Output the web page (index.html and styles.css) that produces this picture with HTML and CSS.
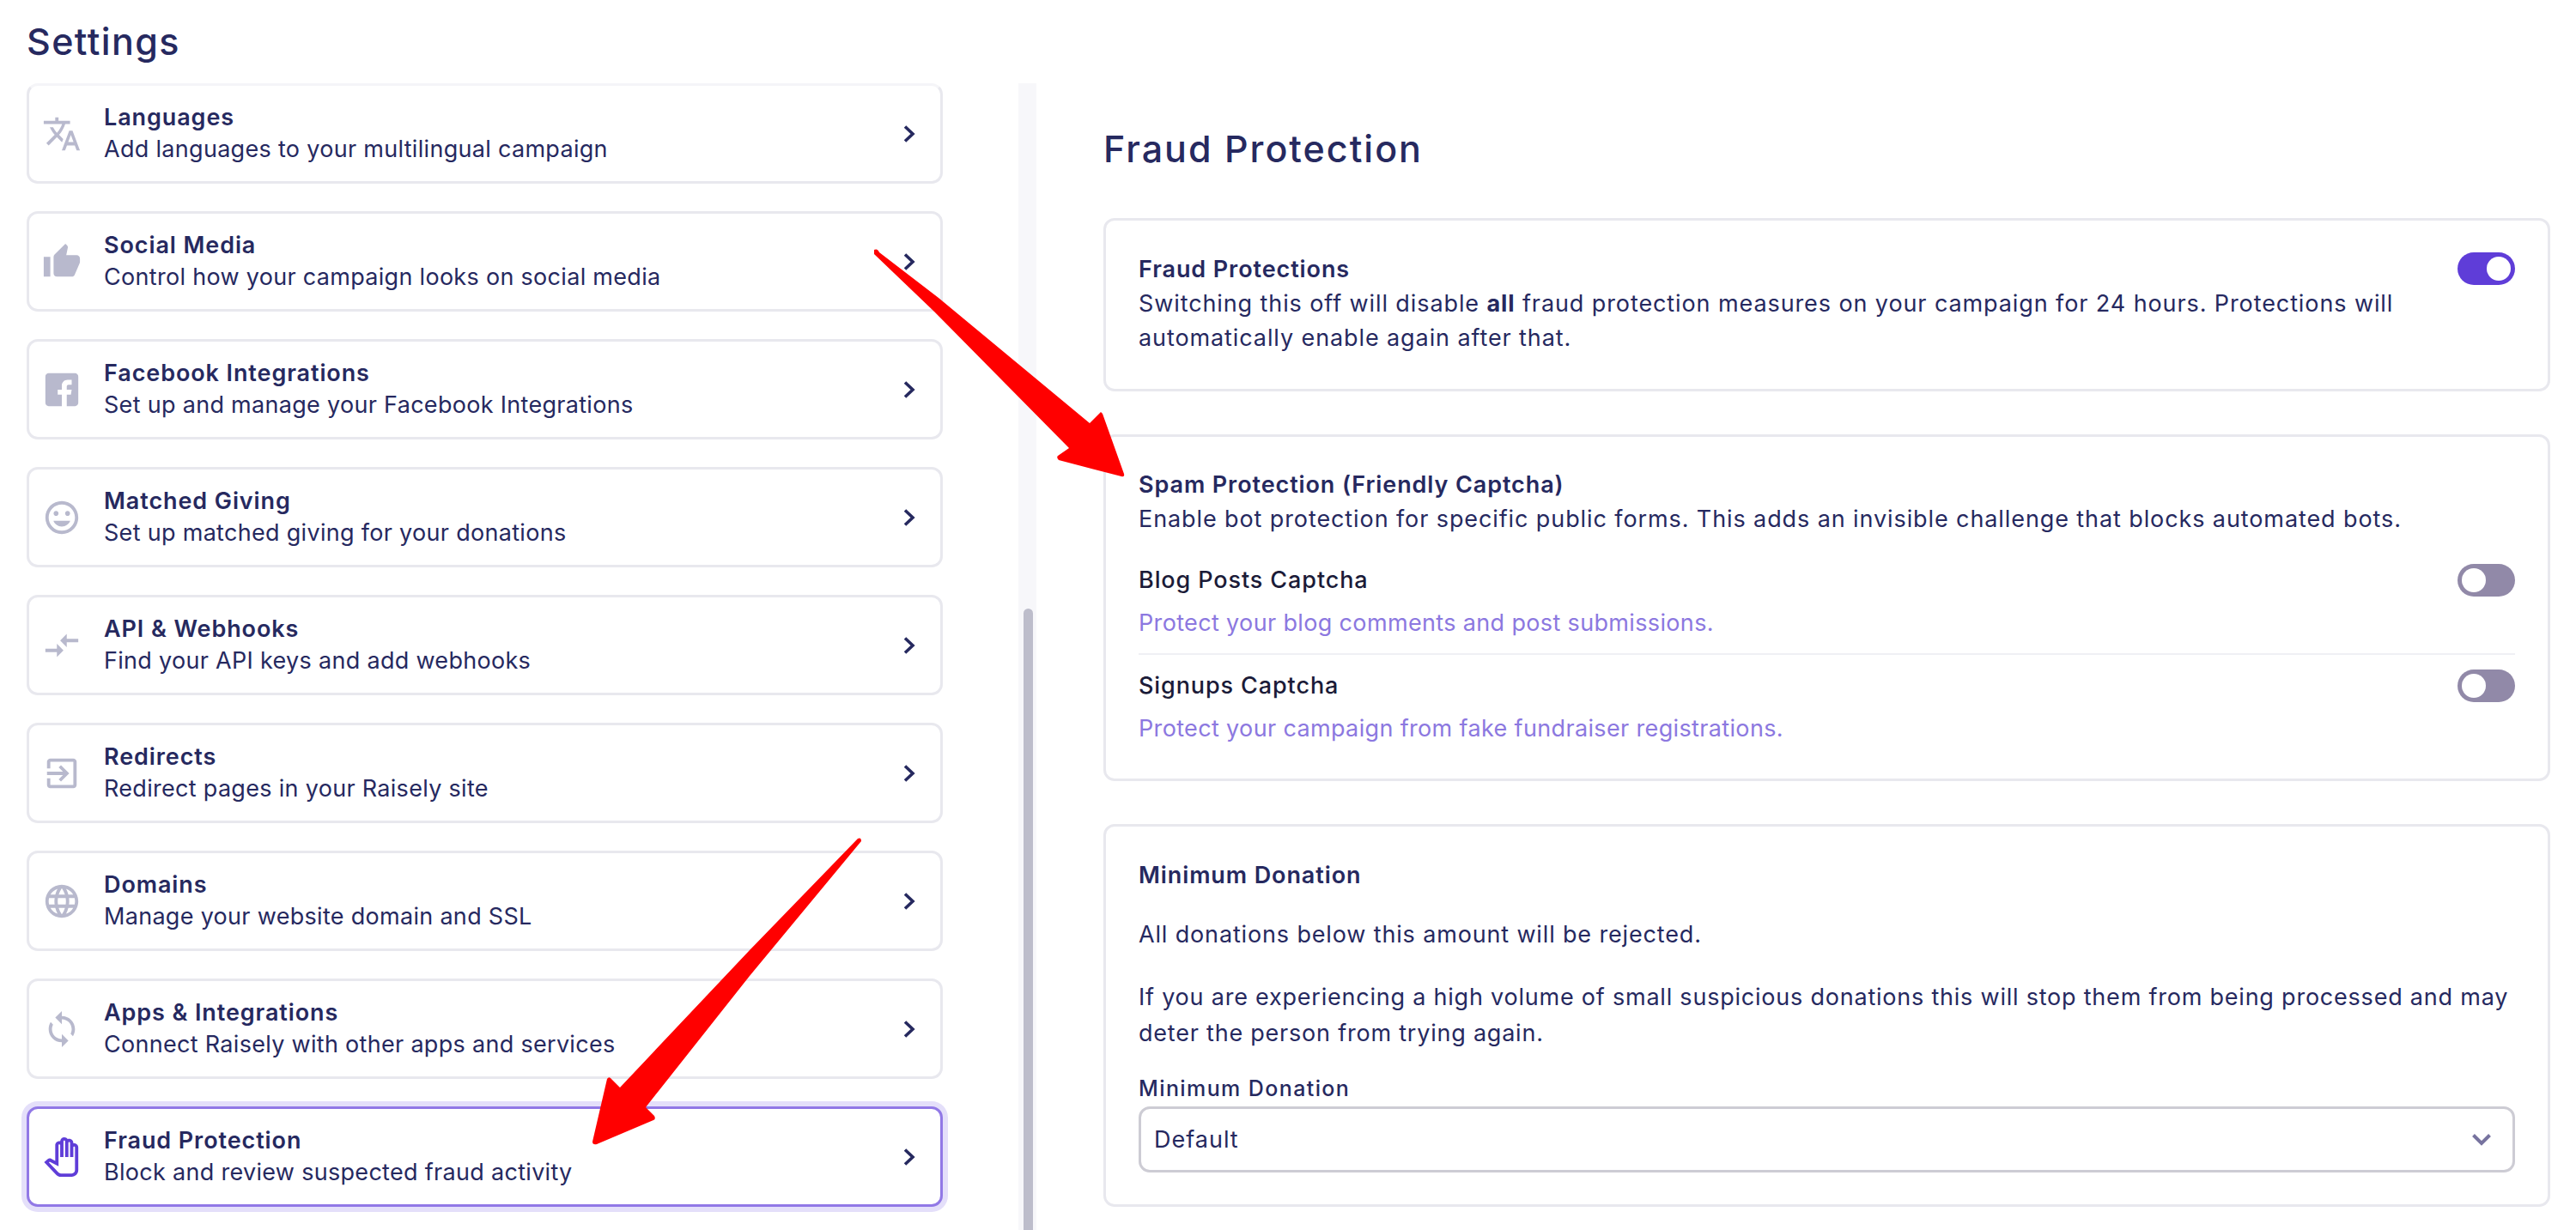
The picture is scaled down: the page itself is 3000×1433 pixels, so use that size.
FILE: index.html
```html
<!DOCTYPE html>
<html>
<head>
    <meta charset="utf-8">
    <title>Settings</title>
    <link rel="stylesheet" href="styles.css">
</head>
<body>
<div class="page">
    <aside class="sidebar">
        <h1 class="sidebar-title">Settings</h1>
        <div class="sidebar-body">
            <nav class="menu">
                <a class="menu-item first">
                    <svg class="menu-icon" viewBox="0 0 24 24"><path d="M12.87 15.07l-2.54-2.51.03-.03c1.74-1.94 2.98-4.17 3.71-6.53H17V4h-7V2H8v2H1v1.99h11.17C11.5 7.92 10.44 9.75 9 11.35 8.07 10.32 7.3 9.19 6.69 8h-2c.73 1.63 1.73 3.17 2.98 4.56l-5.09 5.02L4 19l5-5 3.11 3.11.76-2.04zM18.5 10h-2L12 22h2l1.12-3h4.75L21 22h2l-4.5-12zm-2.62 7l1.62-4.33L19.12 17h-3.24z"/></svg>
                    <div class="menu-text"><div class="menu-title">Languages</div><div class="menu-desc">Add languages to your multilingual campaign</div></div>
                    <svg class="menu-chevron" viewBox="0 0 14 20"><path d="M2 1.5L11 10L2 18.5"/></svg>
                </a>
                <a class="menu-item">
                    <svg class="menu-icon" viewBox="0 0 24 24"><path d="M1 21h4V9H1v12zm22-11c0-1.1-.9-2-2-2h-6.31l.95-4.57.03-.32c0-.41-.17-.79-.44-1.06L14.17 1 7.59 7.59C7.22 7.95 7 8.45 7 9v10c0 1.1.9 2 2 2h9c.83 0 1.54-.5 1.84-1.22l3.02-7.05c.09-.23.14-.47.14-.73v-2z"/></svg>
                    <div class="menu-text"><div class="menu-title">Social Media</div><div class="menu-desc">Control how your campaign looks on social media</div></div>
                    <svg class="menu-chevron" viewBox="0 0 14 20"><path d="M2 1.5L11 10L2 18.5"/></svg>
                </a>
                <a class="menu-item">
                    <svg class="menu-icon" viewBox="0 0 24 24"><path d="M20 2H4c-1.1 0-2 .9-2 2v16c0 1.1.9 2 2 2h8v-7h-2.5v-3H12V9.5C12 7.5 13.5 6 15.5 6H18v3h-2c-.55 0-1 .45-1 1v2h3l-.5 3H15v7h5c1.1 0 2-.9 2-2V4c0-1.1-.9-2-2-2z"/></svg>
                    <div class="menu-text"><div class="menu-title">Facebook Integrations</div><div class="menu-desc">Set up and manage your Facebook Integrations</div></div>
                    <svg class="menu-chevron" viewBox="0 0 14 20"><path d="M2 1.5L11 10L2 18.5"/></svg>
                </a>
                <a class="menu-item">
                    <svg class="menu-icon" viewBox="0 0 24 24"><path d="M11.99 2C6.47 2 2 6.48 2 12s4.47 10 9.99 10C17.52 22 22 17.52 22 12S17.52 2 11.99 2zM12 20c-4.42 0-8-3.58-8-8s3.58-8 8-8 8 3.58 8 8-3.58 8-8 8zm3.5-9c.83 0 1.5-.67 1.5-1.5S16.33 8 15.5 8 14 8.67 14 9.5s.67 1.5 1.5 1.5zm-7 0c.83 0 1.5-.67 1.5-1.5S9.33 8 8.5 8 7 8.67 7 9.5 7.67 11 8.5 11zm3.5 6.5c2.33 0 4.31-1.46 5.11-3.5H6.89c.8 2.04 2.78 3.5 5.11 3.5z"/></svg>
                    <div class="menu-text"><div class="menu-title">Matched Giving</div><div class="menu-desc">Set up matched giving for your donations</div></div>
                    <svg class="menu-chevron" viewBox="0 0 14 20"><path d="M2 1.5L11 10L2 18.5"/></svg>
                </a>
                <a class="menu-item">
                    <svg class="menu-icon" viewBox="0 0 24 24"><path d="M9.01 14H2v2h7.01v3L13 15l-3.99-4v3zm5.98-1v-3H22V8h-7.01V5L11 9l3.99 4z"/></svg>
                    <div class="menu-text"><div class="menu-title">API &amp; Webhooks</div><div class="menu-desc">Find your API keys and add webhooks</div></div>
                    <svg class="menu-chevron" viewBox="0 0 14 20"><path d="M2 1.5L11 10L2 18.5"/></svg>
                </a>
                <a class="menu-item">
                    <svg class="menu-icon" viewBox="0 0 24 24"><path d="M10.09 15.59L11.5 17l5-5-5-5-1.41 1.41L12.67 11H3v2h9.67l-2.58 2.59zM19 3H5c-1.11 0-2 .9-2 2v4h2V5h14v14H5v-4H3v4c0 1.1.89 2 2 2h14c1.1 0 2-.9 2-2V5c0-1.1-.9-2-2-2z"/></svg>
                    <div class="menu-text"><div class="menu-title">Redirects</div><div class="menu-desc">Redirect pages in your Raisely site</div></div>
                    <svg class="menu-chevron" viewBox="0 0 14 20"><path d="M2 1.5L11 10L2 18.5"/></svg>
                </a>
                <a class="menu-item">
                    <svg class="menu-icon" viewBox="0 0 24 24"><path d="M11.99 2C6.47 2 2 6.48 2 12s4.47 10 9.99 10C17.52 22 22 17.52 22 12S17.52 2 11.99 2zm6.93 6h-2.95c-.32-1.25-.78-2.45-1.38-3.56 1.84.63 3.37 1.91 4.33 3.56zM12 4.04c.83 1.2 1.48 2.53 1.91 3.96h-3.82c.43-1.43 1.08-2.76 1.91-3.96zM4.26 14C4.1 13.36 4 12.69 4 12s.1-1.36.26-2h3.38c-.08.66-.14 1.32-.14 2 0 .68.06 1.34.14 2H4.26zm.82 2h2.95c.32 1.25.78 2.45 1.38 3.56-1.84-.63-3.37-1.9-4.33-3.56zm2.95-8H5.08c.96-1.66 2.49-2.93 4.33-3.56C8.81 5.55 8.35 6.75 8.03 8zM12 19.96c-.83-1.2-1.48-2.53-1.91-3.96h3.82c-.43 1.43-1.08 2.76-1.91 3.96zM14.34 14H9.66c-.09-.66-.16-1.32-.16-2 0-.68.07-1.35.16-2h4.68c.09.65.16 1.32.16 2 0 .68-.07 1.34-.16 2zm.25 5.56c.6-1.11 1.06-2.31 1.38-3.56h2.95c-.96 1.65-2.49 2.93-4.33 3.56zM16.36 14c.08-.66.14-1.32.14-2 0-.68-.06-1.34-.14-2h3.38c.16.64.26 1.31.26 2s-.1 1.36-.26 2h-3.38z"/></svg>
                    <div class="menu-text"><div class="menu-title">Domains</div><div class="menu-desc">Manage your website domain and SSL</div></div>
                    <svg class="menu-chevron" viewBox="0 0 14 20"><path d="M2 1.5L11 10L2 18.5"/></svg>
                </a>
                <a class="menu-item">
                    <svg class="menu-icon" viewBox="0 0 24 24"><path d="M12 4V1L8 5l4 4V6c3.31 0 6 2.69 6 6 0 1.01-.25 1.97-.7 2.8l1.46 1.46C19.54 15.03 20 13.57 20 12c0-4.42-3.58-8-8-8zm0 14c-3.31 0-6-2.69-6-6 0-1.01.25-1.97.7-2.8L5.24 7.74C4.46 8.97 4 10.43 4 12c0 4.42 3.58 8 8 8v3l4-4-4-4v3z"/></svg>
                    <div class="menu-text"><div class="menu-title">Apps &amp; Integrations</div><div class="menu-desc">Connect Raisely with other apps and services</div></div>
                    <svg class="menu-chevron" viewBox="0 0 14 20"><path d="M2 1.5L11 10L2 18.5"/></svg>
                </a>
                <a class="menu-item active">
                    <svg class="menu-icon" viewBox="0 0 24 24"><path d="M18 24h-6.55c-1.08 0-2.14-.45-2.89-1.23l-7.3-7.61 2.07-1.83c.62-.55 1.53-.66 2.26-.27L8 14.34V4.79c0-1.38 1.12-2.5 2.5-2.5.17 0 .34.02.51.05.09-1.3 1.17-2.34 2.49-2.34.86 0 1.61.43 2.06 1.09.29-.12.61-.18.94-.18 1.38 0 2.5 1.12 2.5 2.5v.28c.16-.03.33-.05.5-.05 1.38 0 2.5 1.12 2.5 2.5V20c0 2.21-1.79 4-4 4zM4.14 15.28l5.86 6.1c.38.39.9.62 1.44.62H18c1.1 0 2-.9 2-2V6.15c0-.28-.22-.5-.5-.5s-.5.22-.5.5V12h-2V3.42c0-.28-.22-.5-.5-.5s-.5.22-.5.5V12h-2V2.51c0-.28-.22-.5-.5-.5s-.5.22-.5.5V12h-2V4.79c0-.28-.22-.5-.5-.5s-.5.23-.5.5v12.87l-5.35-2.83-.51.45z"/></svg>
                    <div class="menu-text"><div class="menu-title">Fraud Protection</div><div class="menu-desc">Block and review suspected fraud activity</div></div>
                    <svg class="menu-chevron" viewBox="0 0 14 20"><path d="M2 1.5L11 10L2 18.5"/></svg>
                </a>
            </nav>
            <div class="scroll-track"><div class="scroll-thumb"></div></div>
        </div>
    </aside>

    <main class="content">
        <h2 class="content-title">Fraud Protection</h2>

        <section class="panel panel-master">
            <div class="row">
                <div class="row-text">
                    <div class="panel-title">Fraud Protections</div>
                    <p class="panel-copy">Switching this off will disable <b>all</b> fraud protection measures on your campaign for 24 hours. Protections will automatically enable again after that.</p>
                </div>
                <span class="toggle on"><i></i></span>
            </div>
        </section>

        <section class="panel panel-spam">
            <div class="panel-title">Spam Protection (Friendly Captcha)</div>
            <p class="panel-copy">Enable bot protection for specific public forms. This adds an invisible challenge that blocks automated bots.</p>
            <div class="option">
                <div class="row">
                    <div class="option-label">Blog Posts Captcha</div>
                    <span class="toggle"><i></i></span>
                </div>
                <div class="option-help">Protect your blog comments and post submissions.</div>
            </div>
            <div class="option divided">
                <div class="row">
                    <div class="option-label">Signups Captcha</div>
                    <span class="toggle"><i></i></span>
                </div>
                <div class="option-help">Protect your campaign from fake fundraiser registrations.</div>
            </div>
        </section>

        <section class="panel">
            <div class="panel-title">Minimum Donation</div>
            <p class="panel-copy first-para">All donations below this amount will be rejected.</p>
            <p class="panel-copy second-para">If you are experiencing a high volume of small suspicious donations this will stop them from being processed and may deter the person from trying again.</p>
            <div class="field-label">Minimum Donation</div>
            <div class="select">
                <span>Default</span>
                <svg class="select-arrow" viewBox="0 0 22 14"><path d="M1.5 1.5L11 11L20.5 1.5"/></svg>
            </div>
        </section>
    </main>

    <!-- red annotation arrows drawn over the screenshot -->
    <svg class="annotations" viewBox="0 0 3000 1433">
        <path d="M1018 291Q1022 289 1024 294L1093 347L1269 493L1282 480L1284 482L1309 552Q1310 556 1306 555L1233 536Q1230 533 1232 531L1245 522L1088 363L1018 296Z"/>
        <path d="M999 977Q1003 975 1003 980L873 1137L752 1290L762 1300Q764 1304 761 1305L695 1333Q690 1334 690 1330L707 1257Q709 1254 711 1256L722 1267L873 1107Z"/>
    </svg>
</div>
</body>
</html>
```

FILE: styles.css
```css
* { box-sizing: border-box; }

html, body { margin: 0; height: 100%; }
body {
    background: #fff;
    color: #26295f;
    font-family: Inter, "Noto Sans", sans-serif;
    font-size: 27px;
    line-height: 40px;
    overflow: hidden;
}

.page { display: flex; height: 1433px; position: relative; }

/* Sidebar */
.sidebar { width: 1207px; flex: none; display: flex; flex-direction: column; }
.sidebar-title {
    height: 97px;
    margin: 0;
    padding: 20px 0 0 31px;
    font-size: 43px;
    line-height: 56px;
    font-weight: 500;
    letter-spacing: 1.4px;
}
.sidebar-body { flex: 1; display: flex; min-height: 0; }

.menu { width: 1186px; padding: 0 88px 0 31px; display: flex; flex-direction: column; gap: 32px; }
.menu-item {
    height: 117px;
    flex: none;
    display: flex;
    align-items: center;
    padding: 0 29px 0 15px;
    border: 3px solid #e8e8ee;
    border-radius: 13px;
    background: #fff;
}
.menu-item.first { border-top-color: #f5f5f8; }
.menu-item.active { border-color: #9178e6; box-shadow: 0 0 0 6px #e4dffa; }
.menu-icon { width: 46px; height: 46px; flex: none; fill: #b8b9cd; }
.active .menu-icon { fill: #5f3dd8; }
.menu-text { flex: 1; margin-left: 26px; }
.menu-title { font-weight: 600; line-height: 36px; letter-spacing: 0.9px; }
.menu-desc { line-height: 38px; letter-spacing: 0.3px; }
.menu-chevron { width: 14px; height: 20px; flex: none; fill: none; stroke: #26295f; stroke-width: 3.6; }

.scroll-track { width: 21px; flex: none; background: #f7f7fa; padding: 612px 0 0 6px; }
.scroll-thumb { width: 11px; height: 100%; background: #bdbdcb; border-radius: 6px 6px 0 0; }

/* Main panel */
.content { flex: 1; padding: 147px 30px 0 78px; }
.content-title { margin: 0 0 55px; font-size: 43px; line-height: 52px; font-weight: 500; letter-spacing: 2px; }

.panel {
    border: 3px solid #e8e8ee;
    border-radius: 13px;
    padding: 37px 38px;
    margin-bottom: 50px;
}
.panel-master { padding-bottom: 39px; }
.panel-spam { padding-top: 36px; padding-bottom: 38px; }
.panel-title { font-weight: 600; letter-spacing: 0.9px; }
.panel-copy { margin: 0; letter-spacing: 0.9px; }
.panel-copy.first-para { margin-top: 28px; line-height: 42px; letter-spacing: 0.85px; }
.panel-copy.second-para { margin-top: 31px; line-height: 42px; letter-spacing: 0.78px; }
.panel-copy b { font-weight: 700; }

.row { display: flex; justify-content: space-between; align-items: flex-start; }
.row-text { width: 1500px; }

.toggle {
    width: 67px;
    height: 38px;
    flex: none;
    display: flex;
    align-items: center;
    padding: 0 5px;
    border-radius: 19px;
    background: #9189a8;
}
.toggle i { width: 28px; height: 28px; border-radius: 14px; background: #fff; }
.toggle.on { justify-content: flex-end; background: #5f3dd8; }

.option { margin-top: 31px; }
.option.divided { margin-top: 15px; padding-top: 16px; border-top: 2px solid #eff0f4; }
.option .row { align-items: center; }
.option-label { color: #1b1b38; font-weight: 500; letter-spacing: 0.9px; }
.option-help { margin-top: 10px; color: #8c78e0; letter-spacing: 0.35px; }

.field-label { margin-top: 28px; font-size: 25px; line-height: 30px; font-weight: 500; letter-spacing: 1.4px; }
.select {
    height: 77px;
    margin-top: 6px;
    display: flex;
    align-items: center;
    justify-content: space-between;
    padding: 0 25px 0 15px;
    border: 3px solid #cdccd4;
    border-radius: 13px;
    letter-spacing: 1px;
}
.select-arrow { width: 22px; height: 14px; fill: none; stroke: #77739f; stroke-width: 4; }

.annotations { position: absolute; left: 0; top: 0; width: 3000px; height: 1433px; fill: #ff0000; pointer-events: none; }
```
